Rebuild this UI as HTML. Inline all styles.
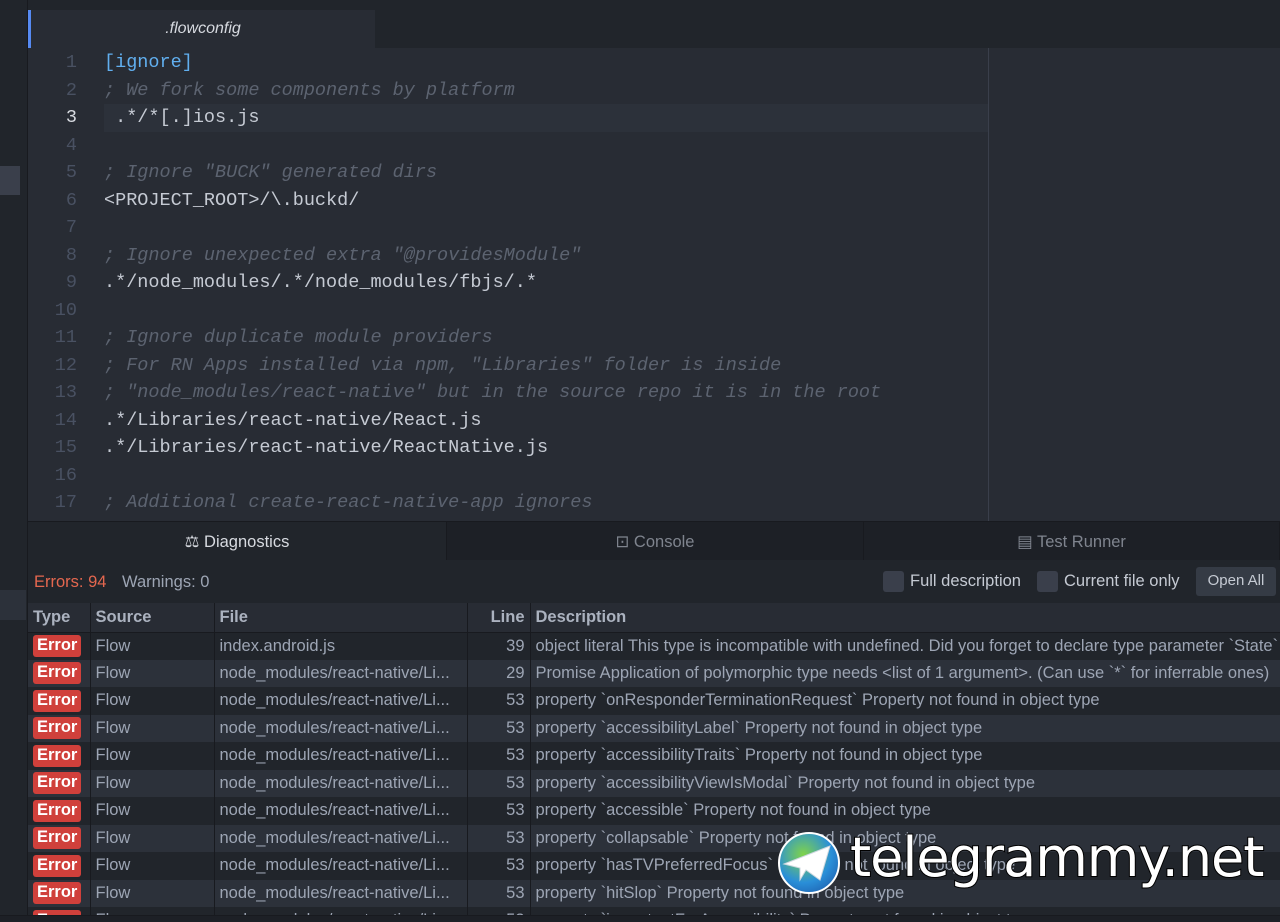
<!DOCTYPE html>
<html style="width:1280px;height:922px;overflow:hidden"><head><meta charset="utf-8"><style>
*{margin:0;padding:0;box-sizing:border-box}
body{width:1280px;height:922px;overflow:hidden;background:#21252b;font-family:"Liberation Sans",sans-serif;position:relative}
.abs{position:absolute}
#side{left:0;top:0;width:28px;height:922px;background:#21252b;border-right:1px solid #181a1f}
#top{left:28px;top:0;width:1252px;height:48px;background:#21252b}
#tab{left:28px;top:10px;width:347px;height:38px;background:#282c34;border-left:3px solid #568af2;color:#d7dae0;font-style:italic;font-size:16px;text-align:center;line-height:38px}
#ed{left:28px;top:48px;width:1252px;height:473px;background:#282c34;overflow:hidden}
.ln{position:absolute;left:0;width:1252px;height:27.5px;font-family:"Liberation Mono",monospace;font-size:18.5px;line-height:27.5px;margin-top:1px}
.ln .n{position:absolute;left:0;width:49px;text-align:right;color:#495162}
.ln .c{position:absolute;left:76px;white-space:pre;color:#c5cad3}
.cm{color:#5c6370!important;font-style:italic}
#guide{left:988px;top:48px;width:1px;height:473px;background:#3a3f4b}
#ptabs{left:28px;top:521px;width:1252px;height:39px;background:#21252b;border-top:1px solid #181a1f}
.pt{position:absolute;top:0;height:39px;line-height:40px;font-size:16.5px;text-align:center;color:#7f848e;border-right:1px solid #181a1f;background:#1d2026}
#bar{left:28px;top:560px;width:1252px;height:43px;background:#21252b;font-size:16.5px}
#tw{position:absolute;left:28px;top:603px;width:1252px;height:312px;overflow:hidden}
table{border-collapse:collapse;font-size:16.5px;width:1300px;table-layout:fixed}
td,th{height:27.5px;padding:0 5px;white-space:nowrap;overflow:hidden;border-right:1px solid #181a1f;color:#9da5b4;text-align:left}
th{color:#abb2bf;font-weight:bold;background:#282c34;border-bottom:1px solid #181a1f;height:29px}
tr.o td{background:#21252b}tr.e td{background:#2c313a}
.err{display:inline-block;background:#d0403b;color:#fff;font-weight:bold;padding:0 4px;border-radius:3px;line-height:21px;height:22px}
.cb{display:inline-block;width:21px;height:21px;background:#3a3f4b;border-radius:3px;vertical-align:middle;margin-right:6px}
#wm{left:850px;top:826px;font-size:54px;color:#fff;font-family:"DejaVu Sans",sans-serif;-webkit-text-stroke:2px #000;paint-order:stroke fill;letter-spacing:-1px}
</style></head><body>
<div id="side" class="abs"><div class="abs" style="left:0;top:166px;width:20px;height:29px;background:#3a3f4b"></div><div class="abs" style="left:0;top:590px;width:26px;height:30px;background:#2c313a"></div></div>
<div id="top" class="abs"></div>
<div id="tab" class="abs">.flowconfig</div>
<div id="ed" class="abs">
<div class="abs" style="left:76px;top:56px;width:884px;height:28px;background:#2c313a"></div>
<div class="ln" style="top:0"><span class="n">1</span><span class="c" style="color:#61afef">[ignore]</span></div>
<div class="ln" style="top:27.5px"><span class="n">2</span><span class="c cm">; We fork some components by platform</span></div>
<div class="ln" style="top:55px"><span class="n" style="color:#d7dae0">3</span><span class="c"> .*/*[.]ios.js</span></div>
<div class="ln" style="top:82.5px"><span class="n">4</span></div>
<div class="ln" style="top:110px"><span class="n">5</span><span class="c cm">; Ignore "BUCK" generated dirs</span></div>
<div class="ln" style="top:137.5px"><span class="n">6</span><span class="c">&lt;PROJECT_ROOT&gt;/\.buckd/</span></div>
<div class="ln" style="top:165px"><span class="n">7</span></div>
<div class="ln" style="top:192.5px"><span class="n">8</span><span class="c cm">; Ignore unexpected extra "@providesModule"</span></div>
<div class="ln" style="top:220px"><span class="n">9</span><span class="c">.*/node_modules/.*/node_modules/fbjs/.*</span></div>
<div class="ln" style="top:247.5px"><span class="n">10</span></div>
<div class="ln" style="top:275px"><span class="n">11</span><span class="c cm">; Ignore duplicate module providers</span></div>
<div class="ln" style="top:302.5px"><span class="n">12</span><span class="c cm">; For RN Apps installed via npm, "Libraries" folder is inside</span></div>
<div class="ln" style="top:330px"><span class="n">13</span><span class="c cm">; "node_modules/react-native" but in the source repo it is in the root</span></div>
<div class="ln" style="top:357.5px"><span class="n">14</span><span class="c">.*/Libraries/react-native/React.js</span></div>
<div class="ln" style="top:385px"><span class="n">15</span><span class="c">.*/Libraries/react-native/ReactNative.js</span></div>
<div class="ln" style="top:412.5px"><span class="n">16</span></div>
<div class="ln" style="top:440px"><span class="n">17</span><span class="c cm">; Additional create-react-native-app ignores</span></div>
</div>
<div id="guide" class="abs"></div>
<div id="ptabs" class="abs">
<div class="pt" style="left:0;width:419px;background:#21252b;color:#d7dae0">⚖ Diagnostics</div>
<div class="pt" style="left:419px;width:417px">⊡ Console</div>
<div class="pt" style="left:836px;width:416px">▤ Test Runner</div>
</div>
<div id="bar" class="abs">
<span class="abs" style="left:6px;top:13px;color:#e4674f">Errors: 94</span>
<span class="abs" style="left:94px;top:13px;color:#9da5b4">Warnings: 0</span>
<span class="abs" style="left:855px;top:11px;color:#c5cad3"><span class="cb"></span>Full description</span>
<span class="abs" style="left:1009px;top:11px;color:#c5cad3"><span class="cb"></span>Current file only</span>
<span class="abs" style="left:1168px;top:7px;width:80px;height:29px;background:#353b45;border-radius:3px;color:#c5cad3;font-size:15px;text-align:center;line-height:28px">Open All</span>
</div>
<div id="tw"><table>
<colgroup><col style="width:62px"><col style="width:124px"><col style="width:253px"><col style="width:63px"><col></colgroup>
<tr><th>Type</th><th>Source</th><th>File</th><th style="text-align:right">Line</th><th>Description</th></tr>
<tr class="o"><td><span class="err">Error</span></td><td>Flow</td><td>index.android.js</td><td style="text-align:right">39</td><td>object literal This type is incompatible with undefined. Did you forget to declare type parameter `State`</td></tr>
<tr class="e"><td><span class="err">Error</span></td><td>Flow</td><td>node_modules/react-native/Li...</td><td style="text-align:right">29</td><td>Promise Application of polymorphic type needs &lt;list of 1 argument&gt;. (Can use `*` for inferrable ones)</td></tr>
<tr class="o"><td><span class="err">Error</span></td><td>Flow</td><td>node_modules/react-native/Li...</td><td style="text-align:right">53</td><td>property `onResponderTerminationRequest` Property not found in object type</td></tr>
<tr class="e"><td><span class="err">Error</span></td><td>Flow</td><td>node_modules/react-native/Li...</td><td style="text-align:right">53</td><td>property `accessibilityLabel` Property not found in object type</td></tr>
<tr class="o"><td><span class="err">Error</span></td><td>Flow</td><td>node_modules/react-native/Li...</td><td style="text-align:right">53</td><td>property `accessibilityTraits` Property not found in object type</td></tr>
<tr class="e"><td><span class="err">Error</span></td><td>Flow</td><td>node_modules/react-native/Li...</td><td style="text-align:right">53</td><td>property `accessibilityViewIsModal` Property not found in object type</td></tr>
<tr class="o"><td><span class="err">Error</span></td><td>Flow</td><td>node_modules/react-native/Li...</td><td style="text-align:right">53</td><td>property `accessible` Property not found in object type</td></tr>
<tr class="e"><td><span class="err">Error</span></td><td>Flow</td><td>node_modules/react-native/Li...</td><td style="text-align:right">53</td><td>property `collapsable` Property not found in object type</td></tr>
<tr class="o"><td><span class="err">Error</span></td><td>Flow</td><td>node_modules/react-native/Li...</td><td style="text-align:right">53</td><td>property `hasTVPreferredFocus` Property not found in object type</td></tr>
<tr class="e"><td><span class="err">Error</span></td><td>Flow</td><td>node_modules/react-native/Li...</td><td style="text-align:right">53</td><td>property `hitSlop` Property not found in object type</td></tr>
<tr class="o"><td><span class="err">Error</span></td><td>Flow</td><td>node_modules/react-native/Li...</td><td style="text-align:right">53</td><td>property `importantForAccessibility` Property not found in object type</td></tr>
</table></div>
<div class="abs" style="left:0;top:915px;width:1280px;height:7px;background:#1d2026;border-top:1px solid #181a1f"></div>
<div class="abs" style="left:778px;top:832px;width:62px;height:62px;border-radius:50%;background:radial-gradient(circle at 40% 35%,#7fd34a,#2a8fd8 55%,#1a4fa0);border:2px solid #fff"></div>
<svg class="abs" style="left:780px;top:840px" width="56" height="46"><path d="M4 24 L50 6 L40 40 L26 30 L20 40 L20 28 Z" fill="#fff" stroke="#cfd8e0" stroke-width="1"/></svg>
<div id="wm" class="abs">telegrammy.net</div>
</body></html>
